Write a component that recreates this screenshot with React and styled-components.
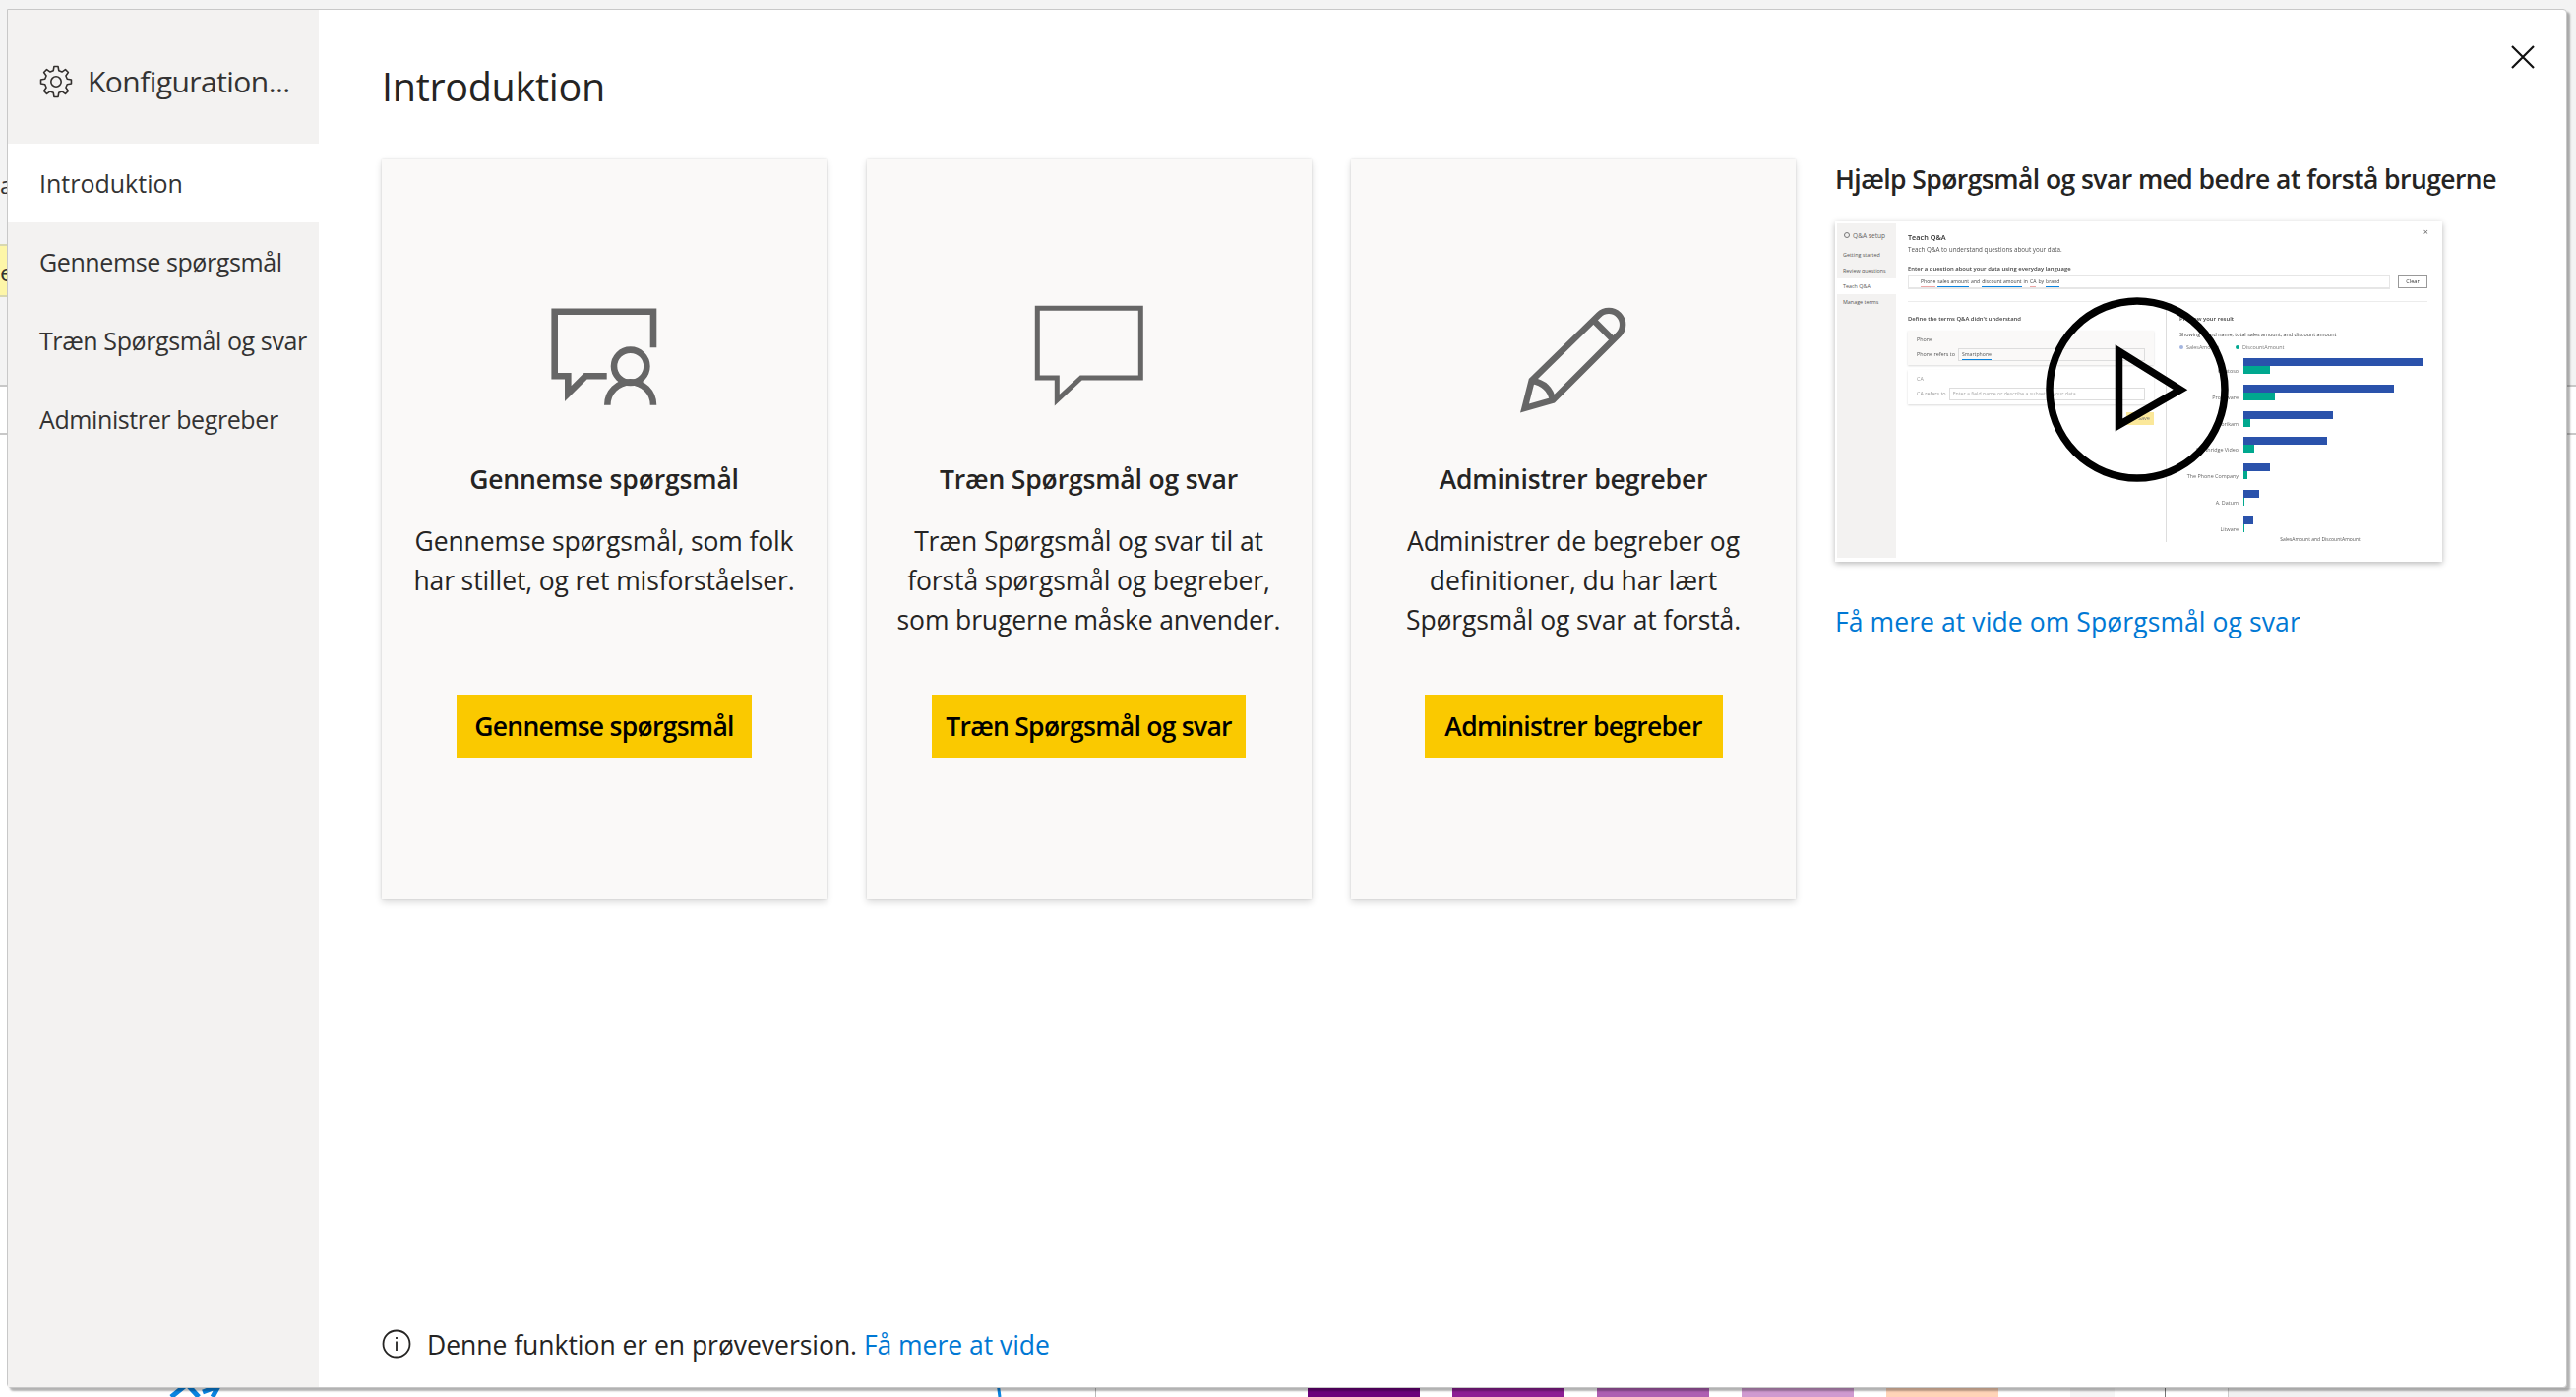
import React from "react";
import styled, { createGlobalStyle } from "styled-components";

const Global = createGlobalStyle`
  html, body { margin: 0; padding: 0; background: #fff; }
  body { font-family: "Open Sans", "Noto Sans", sans-serif; color: #252423; }
  * { box-sizing: border-box; }
`;

const Page = styled.div`
  position: relative;
  width: 2618px;
  height: 1420px;
  overflow: hidden;
  background: #fff;
`;

const TopBand = styled.div`
  position: absolute; left: 0; top: 0; right: 0; height: 393px;
  background: #f3f3f3;
  border-bottom: 2px solid #c8c8c8;
`;
const LowerRule = styled.div`
  position: absolute; left: 0; top: 440px; right: 0; height: 2px;
  background: #c8c8c8;
`;
const PeekLetter = styled.span`
  position: absolute; left: ${p => p.$left || 0}px; top: ${p => p.$top}px;
  font-size: 24px; line-height: 30px; color: #333;
`;
const YellowTab = styled.div`
  position: absolute; left: 0; top: 248px; width: 10px; height: 54px;
  background: #fdf6a8;
  border-top: 2px solid #d8d8b0; border-bottom: 2px solid #d8d8b0;
`;

const BottomStrip = styled.div`
  position: absolute; left: 1329px; top: 1411px; right: 0; height: 9px;
  display: flex;
`;
const Swatch = styled.div`
  width: 114px; margin-right: 33px;
  background: ${p => p.$c};
`;
const StripGrey = styled.div`
  width: 45px; margin-left: 40px; background: #f5f5f5;
`;
const StripLine = styled.div`
  width: 1px; margin-left: 51px; background: #777;
`;
const StripRest = styled.div`
  flex: 1; margin-left: 63px; background: #f1f1f1; border-left: 1px solid #ccc;
`;
const BottomLogo = styled.svg`
  position: absolute; left: 160px; top: 1405px;
`;
const BottomMark = styled.svg`
  position: absolute; left: 1010px; top: 1405px;
`;
const BottomRule = styled.div`
  position: absolute; left: 1113px; top: 1410px; width: 1px; height: 10px; background: #bbb;
`;

const Modal = styled.div`
  position: absolute;
  left: 7px; top: 9px;
  width: 2602px; height: 1402px;
  display: flex;
  background: #fff;
  border: 1px solid #c8c8c8;
  border-radius: 0 4px 4px 4px;
  box-shadow: 3px 3px 2px rgba(0, 0, 0, 0.3);
`;

const Sidebar = styled.nav`
  width: 316px;
  flex: none;
  background: #f3f2f1;
  display: flex;
  flex-direction: column;
`;
const SideHeader = styled.div`
  height: 136px;
  padding: 9px 0 0 32px;
  display: flex;
  align-items: center;
  gap: 15px;
  font-size: 30px;
  color: #333;
  letter-spacing: -0.55px;
`;
const NavItem = styled.div`
  height: 80px;
  padding-left: 32px;
  display: flex;
  align-items: center;
  font-size: 25px;
  letter-spacing: ${p => (p.$active ? "0" : "-0.4px")};
  white-space: nowrap;
  color: #333;
  background: ${p => (p.$active ? "#fff" : "transparent")};
  font-weight: ${p => (p.$active ? 500 : 400)};
`;

const Main = styled.main`
  flex: 1;
  min-width: 0;
  padding: 0 0 0 64px;
  display: flex;
  flex-direction: column;
`;
const Title = styled.h1`
  margin: 0;
  height: 152px;
  padding-top: 54px;
  font-size: 39.5px;
  line-height: 48px;
  font-weight: 500;
  letter-spacing: -0.3px;
  color: #252423;
`;
const Content = styled.div`
  display: flex;
  align-items: flex-start;
`;
const Cards = styled.div`
  display: grid;
  grid-template-columns: repeat(3, 452px);
  column-gap: 40.5px;
`;
const Card = styled.section`
  height: 752px;
  padding-top: 146px;
  background: #faf9f8;
  box-shadow: 0 3px 7px rgba(0, 0, 0, 0.14), 0 0 2px rgba(0, 0, 0, 0.12);
  display: flex;
  flex-direction: column;
  align-items: center;
`;
const CardIcon = styled.svg`
  display: block;
  overflow: visible;
  fill: none;
  stroke: #666;
  stroke-miterlimit: 10;
`;
const CardTitle = styled.h2`
  margin: 49px 0 0;
  font-size: 26.5px;
  line-height: 40px;
  font-weight: 600;
  letter-spacing: -0.15px;
  color: #252423;
  white-space: nowrap;
`;
const CardBody = styled.p`
  margin: 23px 0 56px;
  width: 400px;
  min-height: 120px;
  font-size: 26.5px;
  line-height: 40px;
  letter-spacing: -0.12px;
  text-align: center;
  color: #252423;
`;
const Line = styled.span`
  display: block;
  white-space: nowrap;
`;
const CTA = styled.button`
  width: ${p => p.$w}px;
  height: 64px;
  border: 0;
  padding: 0;
  background: #fac900;
  color: #000;
  font-family: inherit;
  font-size: 26.5px;
  font-weight: 600;
  letter-spacing: -0.72px;
  white-space: nowrap;
`;

const Aside = styled.aside`
  margin-left: 40px;
  width: 700px;
`;
const AsideTitle = styled.h3`
  margin: 0 0 23px;
  font-size: 26.5px;
  line-height: 40px;
  font-weight: 600;
  letter-spacing: -0.56px;
  white-space: nowrap;
  color: #252423;
`;
const LinkText = styled.a`
  color: #0078d4;
  text-decoration: none;
  font-size: 26.5px;
  letter-spacing: -0.03px;
`;
const BlockLink = styled(LinkText)`
  display: block;
  margin-top: 41px;
  line-height: 40px;
  letter-spacing: 0.09px;
  white-space: nowrap;
`;

const Thumb = styled.div`
  position: relative;
  width: 617px;
  height: 346px;
  background: #fff;
  box-shadow: 0 2px 6px rgba(0, 0, 0, 0.28);
  padding: 2px 0 4px 2px;
  overflow: hidden;
`;
const ThumbInner = styled.div`
  display: flex;
  height: 100%;
  filter: blur(0.55px);
  color: #333;
  font-size: 5.4px;
  line-height: 9px;
  white-space: nowrap;
`;
const TSide = styled.div`
  width: 60px;
  flex: none;
  background: #f3f2f1;
  padding-top: 1px;
`;
const THead = styled.div`
  height: 22px;
  padding-left: 7px;
  display: flex;
  align-items: center;
  gap: 3px;
  font-size: 6.6px;
  color: #666;
  margin-bottom: 1px;
`;
const TDot = styled.span`
  width: 6px; height: 6px; border: 1px solid #777; border-radius: 50%;
`;
const TNav = styled.div`
  height: 16px;
  padding-left: 6px;
  display: flex;
  align-items: center;
  background: ${p => (p.$on ? "#fff" : "transparent")};
  color: #555;
`;
const TMain = styled.div`
  flex: 1;
  min-width: 0;
  position: relative;
  padding: 8px 15px 0 12px;
`;
const TClose = styled.span`
  position: absolute; right: 14px; top: 4px; font-size: 9px; color: #666;
`;
const TTitle = styled.div`
  font-size: 7.3px; line-height: 12px; font-weight: 600; color: #333;
`;
const TSub = styled.div`
  margin-top: 3px; font-size: 6.3px; line-height: 8px; color: #555;
`;
const TPrompt = styled.div`
  margin-top: 10px; font-size: 5.9px; line-height: 10px; font-weight: 600; color: #444;
`;
const TQueryRow = styled.div`
  margin-top: 2px;
  display: flex;
  gap: 8px;
`;
const TQuery = styled.div`
  flex: 1;
  height: 14px;
  border: 1px solid #e6e6e6;
  border-bottom-width: 2px;
  padding-left: 12px;
  display: flex;
  gap: 2px;
  align-items: center;
  font-size: 5.1px;
  color: #444;
`;
const TTerm = styled.span`
  border-bottom: 1.5px solid ${p => (p.$bad ? "#eda6a6" : "#0a84e0")};
`;
const TClear = styled.div`
  width: 30px;
  height: 13px;
  border: 1px solid #999;
  display: flex;
  align-items: center;
  justify-content: center;
  font-size: 5.6px;
`;
const TDivider = styled.div`
  margin-top: 12px;
  height: 1px;
  background: #ececec;
`;
const TColumns = styled.div`
  display: flex;
  height: 244px;
`;
const TLeft = styled.div`
  width: 263px;
  flex: none;
  padding: 12px 12px 0 0;
  border-right: 1px solid #ddd;
`;
const TSection = styled.div`
  font-size: 5.9px; line-height: 10px; font-weight: 600; color: #444; margin-bottom: 7px;
`;
const TTermCard = styled.div`
  height: ${p => p.$h}px;
  margin-bottom: 5px;
  padding: 5px 9px 0;
  background: ${p => (p.$soft ? "#fff" : "#faf9f8")};
  box-shadow: 0 0.5px 2px rgba(0, 0, 0, 0.15);
  color: ${p => (p.$soft ? "#999" : "#555")};
  font-size: 5.4px;
`;
const TRow = styled.div`
  margin-top: 4px;
  display: flex;
  align-items: center;
  gap: 3px;
`;
const TInput = styled.div`
  flex: 1;
  height: 13px;
  padding-left: 3px;
  display: flex;
  align-items: center;
  border: 1px solid #ddd;
  font-size: 5.2px;
  color: ${p => (p.$soft ? "#aaa" : "#555")};
`;
const TSave = styled.div`
  margin: 8px 0 0 auto;
  width: 28px;
  height: 13px;
  background: #fbe89a;
  display: flex;
  align-items: center;
  justify-content: flex-end;
  padding-right: 4px;
  font-size: 5.6px;
  color: #777;
`;
const TRight = styled.div`
  flex: 1;
  min-width: 0;
  padding: 12px 0 0 13px;
  position: relative;
`;
const TCaption = styled.div`
  font-size: 5.4px; line-height: 8px; color: #444; margin-bottom: 5px;
`;
const TLegend = styled.div`
  display: flex; align-items: center; gap: 3px;
  font-size: 5.4px; line-height: 8px; color: #777; margin-bottom: 7px;
`;
const TLegendDot = styled.span`
  width: 4px; height: 4px; border-radius: 50%; background: ${p => p.$c};
  margin-left: ${p => p.$gap || 0}px;
`;
const TChart = styled.div`
  display: grid;
  grid-template-columns: 60px 1fr;
  column-gap: 5px;
  grid-auto-rows: 26.8px;
`;
const TLabel = styled.div`
  text-align: right;
  font-size: 5.4px;
  line-height: 26px;
  color: #666;
`;
const TBars = styled.div`
  display: flex;
  flex-direction: column;
`;
const TBar = styled.div`
  height: ${p => p.$h}px;
  background: ${p => p.$c};
`;
const TAxis = styled.div`
  margin: -7px 0 0 34px;
  text-align: center;
  font-size: 5px;
  line-height: 7px;
  color: #555;
`;
const PlayOverlay = styled.svg`
  position: absolute;
  left: 212px;
  top: 75px;
`;

const Footer = styled.footer`
  margin-top: auto;
  height: 63px;
  display: flex;
  align-items: flex-start;
  gap: 16px;
  font-size: 26.5px;
  line-height: 40px;
  letter-spacing: -0.03px;
  white-space: nowrap;
`;
const FootText = styled.span`
  color: #252423;
`;
const InfoIcon = styled.svg`
  display: block;
  margin-top: 4px;
  flex: none;
`;
const CloseBtn = styled.svg`
  position: absolute;
  right: 32px;
  top: 36px;
`;
const GearSvg = styled.svg`
  display: block;
  flex: none;
`;

function gearPath(cx, cy, ro, ri) {
  const n = 8;
  const pts = [];
  for (let i = 0; i < n; i++) {
    const a = (i / n) * Math.PI * 2 - Math.PI / 2;
    const w = Math.PI / n;
    const add = (r, t) => pts.push(`${(cx + r * Math.cos(t)).toFixed(2)} ${(cy + r * Math.sin(t)).toFixed(2)}`);
    add(ri, a - w * 0.62);
    add(ro, a - w * 0.34);
    add(ro, a + w * 0.34);
    add(ri, a + w * 0.62);
  }
  return "M" + pts.join("L") + "Z";
}

const Gear = () => (
  <GearSvg width="34" height="34" viewBox="0 0 34 34" fill="none" stroke="#33302e" strokeWidth="1.6" strokeLinejoin="round">
    <path d={gearPath(17, 17, 15.6, 11.6)} />
    <circle cx="17" cy="17" r="5.2" />
  </GearSvg>
);

const Icon1 = () => (
  <CardIcon width="120" height="110" viewBox="0 0 120 110" strokeWidth="6.6">
    <path d="M110 45.3V8.7H9.7V74.3H23.3V92L41 74.3H62.7" />
    <circle cx="86.7" cy="64.3" r="16.7" />
    <path d="M63.3 103.7a23.3 23.3 0 0 1 46.7 0" />
  </CardIcon>
);
const Icon2 = () => (
  <CardIcon width="120" height="110" viewBox="0 0 120 110" strokeWidth="5">
    <path d="M27.3 76H7.3V5.3H112.3V76H51.7L27.3 98.7V76Z" />
  </CardIcon>
);
const Icon3 = () => (
  <CardIcon width="120" height="110" viewBox="0 0 120 110" strokeWidth="6.4">
    <path d="M10.5 107L17.7 78.7L86 12A14 14 0 0 1 106 32L39.3 98.7Z" />
    <path d="M81 18L100 37" />
    <path d="M18 79Q36 82 39 99" />
  </CardIcon>
);

const cards = [
  { icon: <Icon1 />, title: "Gennemse spørgsmål", w: 300, lines: ["Gennemse spørgsmål, som folk", "har stillet, og ret misforståelser."], cta: "Gennemse spørgsmål" },
  { icon: <Icon2 />, title: "Træn Spørgsmål og svar", w: 319, lines: ["Træn Spørgsmål og svar til at", "forstå spørgsmål og begreber,", "som brugerne måske anvender."], cta: "Træn Spørgsmål og svar" },
  { icon: <Icon3 />, title: "Administrer begreber", w: 303, lines: ["Administrer de begreber og", "definitioner, du har lært", "Spørgsmål og svar at forstå."], cta: "Administrer begreber" },
];

const chart = [
  ["Contoso", 183, 27], ["Proseware", 153, 32], ["Fabrikam", 91, 7], ["Southridge Video", 85, 11],
  ["The Phone Company", 27, 4], ["A. Datum", 16, 1], ["Litware", 10, 1],
];

const Thumbnail = () => (
  <Thumb>
    <ThumbInner>
      <TSide>
        <THead><TDot />Q&amp;A setup</THead>
        <TNav>Getting started</TNav>
        <TNav>Review questions</TNav>
        <TNav $on>Teach Q&amp;A</TNav>
        <TNav>Manage terms</TNav>
      </TSide>
      <TMain>
        <TClose>×</TClose>
        <TTitle>Teach Q&amp;A</TTitle>
        <TSub>Teach Q&amp;A to understand questions about your data.</TSub>
        <TPrompt>Enter a question about your data using everyday language</TPrompt>
        <TQueryRow>
          <TQuery>
            <TTerm $bad>Phone</TTerm><TTerm>sales amount</TTerm> and <TTerm>discount amount</TTerm> in <TTerm $bad>CA</TTerm> by <TTerm>brand</TTerm>
          </TQuery>
          <TClear>Clear</TClear>
        </TQueryRow>
        <TDivider />
        <TColumns>
          <TLeft>
            <TSection>Define the terms Q&amp;A didn't understand</TSection>
            <TTermCard $h={35}>
              Phone
              <TRow>Phone refers to <TInput><TTerm>Smartphone</TTerm></TInput></TRow>
            </TTermCard>
            <TTermCard $h={35} $soft>
              CA
              <TRow>CA refers to <TInput $soft>Enter a field name or describe a subset of your data</TInput></TRow>
            </TTermCard>
            <TSave>Save</TSave>
          </TLeft>
          <TRight>
            <TSection>Preview your result</TSection>
            <TCaption>Showing brand name, total sales amount, and discount amount</TCaption>
            <TLegend><TLegendDot $c="#a3b5e0" />SalesAmount<TLegendDot $c="#00a88f" $gap={14} />DiscountAmount</TLegend>
            <TChart>
              {chart.map(([name, blue, green]) => (
                <React.Fragment key={name}>
                  <TLabel>{name}</TLabel>
                  <TBars>
                    <TBar $h={8} $c="#2a52ab" style={{ width: blue }} />
                    <TBar $h={8} $c="#00a88f" style={{ width: green }} />
                  </TBars>
                </React.Fragment>
              ))}
            </TChart>
            <TAxis>SalesAmount and DiscountAmount</TAxis>
          </TRight>
        </TColumns>
      </TMain>
    </ThumbInner>
    <PlayOverlay width="190" height="192" viewBox="0 0 190 192" fill="none" stroke="#000" strokeWidth="7.5">
      <ellipse cx="95" cy="96" rx="89" ry="90" />
      <path d="M76.5 57V132L139 96Z" strokeMiterlimit="10" />
    </PlayOverlay>
  </Thumb>
);

export default function App() {
  return (
    <Page>
      <Global />
      <TopBand />
      <LowerRule />
      <PeekLetter $top={173}>a</PeekLetter>
      <YellowTab />
      <PeekLetter $top={262}>e</PeekLetter>
      <BottomLogo width="120" height="15" viewBox="0 0 120 15" fill="none" stroke="#0a84e0" strokeWidth="5">
        <path d="M14 15L30 2L42 15M46 10L62 4L56 15" />
      </BottomLogo>
      <BottomMark width="10" height="15" viewBox="0 0 10 15" fill="none" stroke="#0a84e0" strokeWidth="3">
        <path d="M4 0L6 15" />
      </BottomMark>
      <BottomRule />
      <BottomStrip>
        <Swatch $c="#6b007b" />
        <Swatch $c="#8d1f94" />
        <Swatch $c="#ae5fb2" />
        <Swatch $c="#cf9ad0" />
        <Swatch $c="#ffd4b8" />
        <StripGrey />
        <StripLine />
        <StripRest />
      </BottomStrip>
      <Modal>
        <Sidebar>
          <SideHeader><Gear />Konfiguration...</SideHeader>
          <NavItem $active>Introduktion</NavItem>
          <NavItem>Gennemse spørgsmål</NavItem>
          <NavItem>Træn Spørgsmål og svar</NavItem>
          <NavItem>Administrer begreber</NavItem>
        </Sidebar>
        <Main>
          <Title>Introduktion</Title>
          <Content>
            <Cards>
              {cards.map(c => (
                <Card key={c.title}>
                  {c.icon}
                  <CardTitle>{c.title}</CardTitle>
                  <CardBody>{c.lines.map(l => <Line key={l}>{l}</Line>)}</CardBody>
                  <CTA $w={c.w}>{c.cta}</CTA>
                </Card>
              ))}
            </Cards>
            <Aside>
              <AsideTitle>Hjælp Spørgsmål og svar med bedre at forstå brugerne</AsideTitle>
              <Thumbnail />
              <BlockLink>Få mere at vide om Spørgsmål og svar</BlockLink>
            </Aside>
          </Content>
          <Footer>
            <InfoIcon width="30" height="30" viewBox="0 0 30 30" fill="none" stroke="#252423" strokeWidth="1.8">
              <circle cx="15" cy="15" r="13.5" />
              <path d="M15 12.5V22M15 8V10" />
            </InfoIcon>
            <FootText>Denne funktion er en prøveversion. <LinkText>Få mere at vide</LinkText></FootText>
          </Footer>
        </Main>
        <CloseBtn width="24" height="24" viewBox="0 0 24 24" fill="none" stroke="#111" strokeWidth="2.2">
          <path d="M1 1L23 23M23 1L1 23" />
        </CloseBtn>
      </Modal>
    </Page>
  );
}
